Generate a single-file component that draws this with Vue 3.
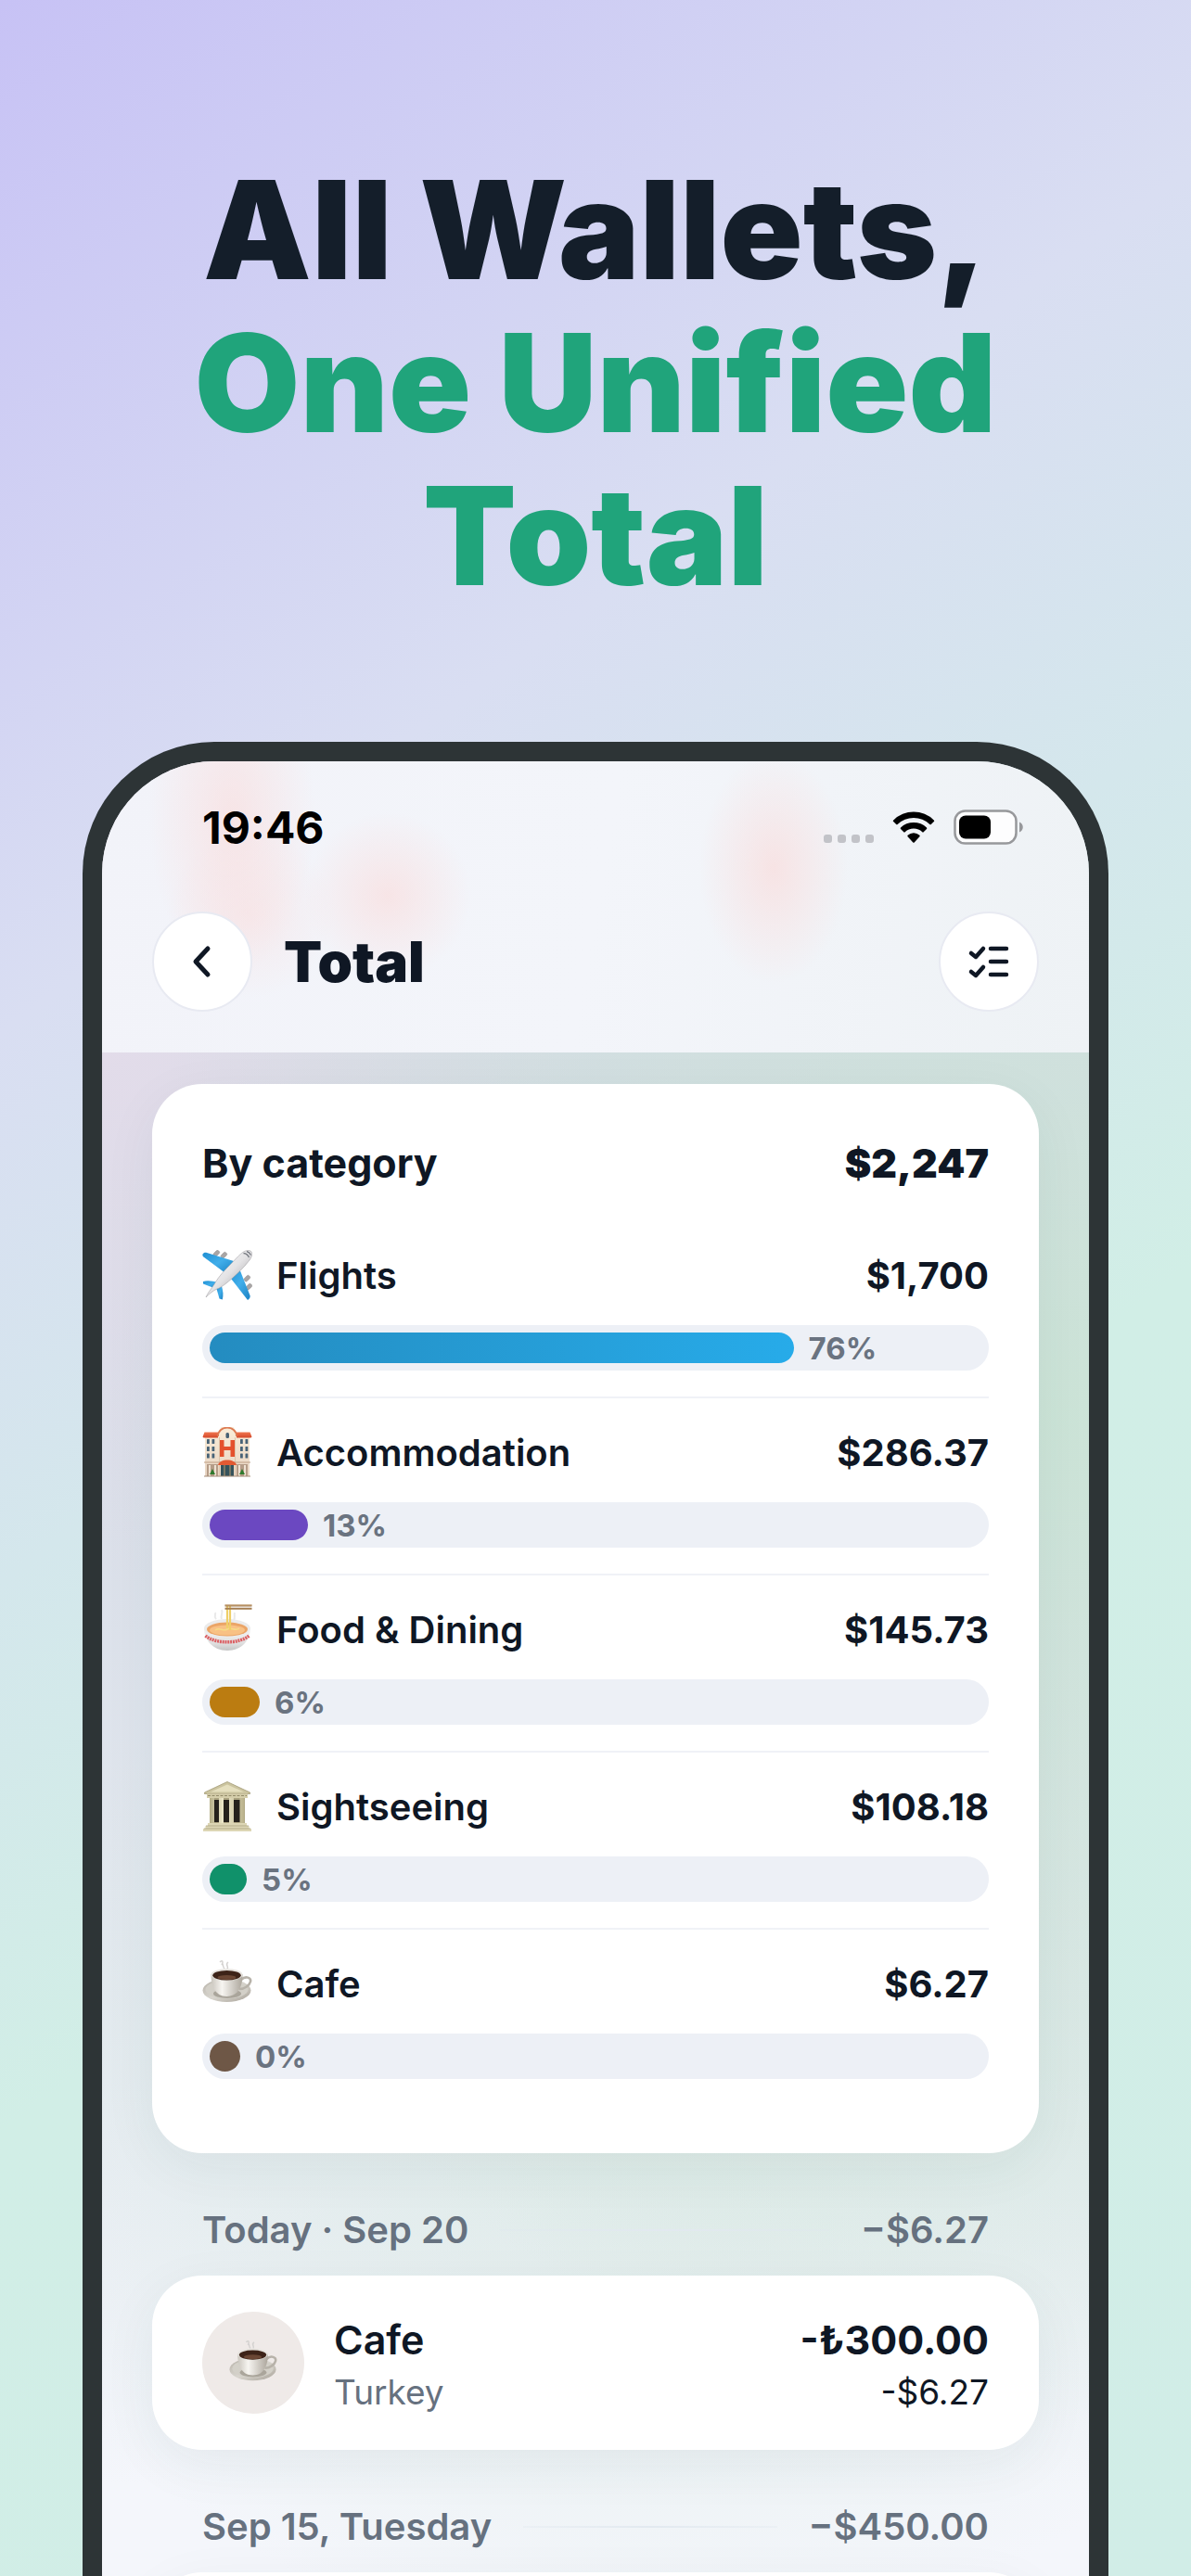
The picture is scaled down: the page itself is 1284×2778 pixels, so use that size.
<template>
  <main class="page">
    <h1 class="headline">
      All Wallets,
      <span class="accent">One Unified<br />Total</span>
    </h1>

    <section class="phone">
      <header class="topbar">
        <div class="status">
          <time>19:46</time>
          <div class="status-icons">
            <svg class="dots" viewBox="0 0 54 36" aria-hidden="true">
              <rect v-for="n in 4" :key="n" :x="(n - 1) * 15" y="26" width="9" height="9" rx="3" />
            </svg>
            <svg class="wifi" viewBox="0 0 46 36" aria-hidden="true">
              <path d="M1.2 10.5a31 31 0 0 1 43.6 0 1 1 0 0 1 0 1.5l-3 3a1 1 0 0 1-1.4 0 25 25 0 0 0-34.8 0 1 1 0 0 1-1.4 0l-3-3a1 1 0 0 1 0-1.5z" />
              <path d="M9 18.6a20 20 0 0 1 28 0 1 1 0 0 1 0 1.4l-3.3 3.3a1 1 0 0 1-1.4 0 13.4 13.4 0 0 0-18.6 0 1 1 0 0 1-1.4 0L9 20a1 1 0 0 1 0-1.4z" />
              <path d="M16.6 26.8a9.2 9.2 0 0 1 12.8 0 1 1 0 0 1 0 1.4l-5.7 6.2a1 1 0 0 1-1.4 0l-5.7-6.2a1 1 0 0 1 0-1.4z" />
            </svg>
            <svg class="battery" viewBox="0 0 76 38" aria-hidden="true">
              <rect x="1.5" y="1.5" width="66" height="35" rx="11" fill="#fdfdfe" stroke="#97989b" stroke-width="2.5" />
              <rect x="6" y="6.5" width="34" height="25" rx="7" />
              <path d="M71 13.5c5 2 5 9 0 11z" fill="#97989b" />
            </svg>
          </div>
        </div>

        <div class="nav">
          <button class="round" type="button" aria-label="Back">
            <svg viewBox="0 0 48 48"><path d="M30 10 17 24l13 14" stroke-width="5" /></svg>
          </button>
          <h2>Total</h2>
          <button class="round" type="button" aria-label="Select">
            <svg viewBox="0 0 48 48">
              <path d="M5 15l5 4 8-9M5 35l5 4 8-9" />
              <path d="M26 10h17M26 24h17M26 38h17" />
            </svg>
          </button>
        </div>
      </header>

      <div class="content">
        <article class="card summary">
          <div class="summary-head">
            <h3>By category</h3>
            <strong>$2,247</strong>
          </div>
          <ul>
            <li v-for="item in categories" :key="item.name">
              <div class="row">
                <svg class="emoji" viewBox="0 0 54 54" aria-hidden="true"><use :href="'#' + item.icon" /></svg>
                <span class="name">{{ item.name }}</span>
                <span class="amount">{{ item.amount }}</span>
              </div>
              <div class="track">
                <div class="fill" :style="{ width: item.share + '%', background: item.color }"></div>
                <span class="percent">{{ Math.round(item.share) }}%</span>
              </div>
            </li>
          </ul>
        </article>

        <template v-for="day in days" :key="day.label">
          <div class="day">
            <span>{{ day.label }}</span>
            <i></i>
            <span>{{ day.total }}</span>
          </div>
          <article class="card entry">
            <template v-if="day.entry">
              <div class="avatar">
                <svg viewBox="0 0 54 54" aria-hidden="true"><use href="#cafe" /></svg>
              </div>
              <div class="labels">
                <span class="title">{{ day.entry.title }}</span>
                <span class="sub">{{ day.entry.place }}</span>
              </div>
              <div class="labels right">
                <span class="title strong">{{ day.entry.local }}</span>
                <span class="sub dark">{{ day.entry.amount }}</span>
              </div>
            </template>
          </article>
        </template>
      </div>
    </section>

    <svg class="sprites" aria-hidden="true">
      <defs>
        <linearGradient id="g-body" x1="0" y1="0" x2="1" y2="1">
          <stop offset="0" stop-color="#ffffff" /><stop offset="0.5" stop-color="#e4e3e5" /><stop offset="1" stop-color="#8d8b8f" />
        </linearGradient>
        <linearGradient id="g-wing" x1="0" y1="0" x2="1" y2="1">
          <stop offset="0" stop-color="#1f8fd3" /><stop offset="0.5" stop-color="#41aeea" /><stop offset="1" stop-color="#1b82c4" />
        </linearGradient>
        <linearGradient id="g-wall" x1="0" y1="0" x2="0" y2="1">
          <stop offset="0" stop-color="#fbeed9" /><stop offset="1" stop-color="#e8d5c3" />
        </linearGradient>
        <linearGradient id="g-roof" x1="0" y1="0" x2="0" y2="1">
          <stop offset="0" stop-color="#f0764f" /><stop offset="1" stop-color="#d4482a" />
        </linearGradient>
        <linearGradient id="g-bowl" x1="0" y1="0" x2="0" y2="1">
          <stop offset="0" stop-color="#f7f7f7" /><stop offset="0.7" stop-color="#dedede" /><stop offset="1" stop-color="#c4c4c4" />
        </linearGradient>
        <linearGradient id="g-stone" x1="0" y1="0" x2="1" y2="0">
          <stop offset="0" stop-color="#b5ae88" /><stop offset="0.4" stop-color="#eee9cb" /><stop offset="1" stop-color="#b9b18b" />
        </linearGradient>
        <linearGradient id="g-cup" x1="0" y1="0" x2="1" y2="0">
          <stop offset="0" stop-color="#c9c5bd" /><stop offset="0.35" stop-color="#f7f5f1" /><stop offset="1" stop-color="#aca69c" />
        </linearGradient>
        <linearGradient id="g-dish" x1="0" y1="0" x2="1" y2="1">
          <stop offset="0" stop-color="#b5b0a7" /><stop offset="0.5" stop-color="#d9d6cf" /><stop offset="1" stop-color="#a8a298" />
        </linearGradient>

        <g id="flights">
          <g fill="#aaa6a6" stroke="#8f8b8b" stroke-width="0.6">
            <rect x="12" y="2" width="7" height="4" rx="1.5" transform="rotate(-45 15 4)" />
            <rect x="20" y="4" width="7" height="4" rx="1.5" transform="rotate(-45 23 6)" />
            <rect x="45" y="29" width="7" height="4" rx="1.5" transform="rotate(-45 48 31)" />
            <rect x="47" y="38" width="7" height="4" rx="1.5" transform="rotate(-45 50 40)" />
          </g>
          <path d="M.5 4.5c1-1.5 2.5-2 4.5-1.5L34 12l-9 13L1.500 7.500c-1-.7-1.300-2-1-3z" fill="url(#g-wing)" />
          <path d="M28 27l12-7 11.5 29c.7 2-.8 4-2.5 5z" fill="url(#g-wing)" />
          <path d="M1 34c4-1.5 10-.8 16 1l-3 6C9 40 4 37.500 1 36.500z" fill="url(#g-wing)" />
          <path d="M15 40l6-1c1.5 5 2 10 .8 14.5l-3.3-1z" fill="url(#g-wing)" />
          <path d="M4 51c2-5 5-8 9-14 3-5.500 8-12 16-20S41 3.500 46 1.200c3.500-1.300 6.500-.8 7.200 1 1.200 3-.4 7-3.200 10-5 6.500-12 13.500-19 19.500S20 40.500 16 42 7 48 4 51z" fill="url(#g-body)" stroke="#98969a" stroke-width="0.5" />
          <path d="M44.500 3.500c3 .2 5 2 6 4.500M48 1.500c2 .5 3.500 2 4.500 4" fill="none" stroke="#777b82" stroke-width="1.3" />
        </g>

        <g id="hotel">
          <path d="M3 10h15V6a9 9 0 0 1 18 0v4h15v43H3z" fill="url(#g-wall)" />
          <path d="M.5 10.500 2.500 5.500H17v6H1.500zM53.500 10.500l-2-5H37v6h15.500z" fill="url(#g-roof)" />
          <path d="M17 10C17-2.500 37-2.500 37 10" fill="none" stroke="#dc7a52" stroke-width="1.8" />
          <path d="M18.500 11v41M35.500 11v41" stroke="#d7bfa4" stroke-width="0.8" />
          <path d="M19 14h4.500v7h7v-7H35v18h-4.500v-7h-7v7H19z" fill="#e4512d" />
          <rect x="25.5" y="6" width="3.5" height="6" rx="1.5" fill="#476174" />
          <g fill="#486377">
            <template v-for="y in [13, 21, 28.5]" :key="y">
              <rect v-for="x in [5, 10.5, 41, 46.5]" :key="x" :x="x" :y="y" width="2.8" height="5" rx="0.5" />
            </template>
          </g>
          <path d="M2 38h50" stroke="#bd9d83" stroke-width="1.2" />
          <path d="M5 40h12v13H5zM37 40h12v13H37z" fill="#b59c87" />
          <path d="M8 53V41M14 53V41M40 53V41M46 53V41" stroke="#eee1d2" stroke-width="2" />
          <path d="M17 41c1-7.500 19-7.500 20 0z" fill="#e25a33" />
          <rect x="20" y="41" width="14" height="12" fill="#35525b" />
          <path d="M24 41v12M30 41v12" stroke="#c9a575" stroke-width="0.9" />
          <path d="M11 45l3 6H8zM43 45l3 6h-6z" fill="#2f7a2d" />
          <path d="M2 53h50" stroke="#a38b78" stroke-width="1.2" />
        </g>

        <g id="food">
          <path d="M15 16c-3-3 0-5-1-7M21 16c-2-4 2-6 0-10M34 17c2-2 0-5 1-8" fill="none" stroke="#e9e9e9" stroke-width="2" />
          <path d="M2 26c0 12 9 24 25 24s25-12 25-24z" fill="url(#g-bowl)" />
          <ellipse cx="27" cy="26" rx="25" ry="10" fill="#ebebeb" />
          <ellipse cx="27" cy="27" rx="22" ry="7.5" fill="#eba567" />
          <ellipse cx="27" cy="28" rx="19" ry="5.5" fill="#f8c185" />
          <path d="M14 28c5-4 8 2 13-1s8 3 13-1" fill="none" stroke="#f6db87" stroke-width="1.5" />
          <path d="M3.500 34c10 9 37 9 47 0" fill="none" stroke="#db5f63" stroke-width="3.5" stroke-dasharray="2 0.8" />
          <path d="M27 2v24M30 2v26" stroke="#efcf68" stroke-width="2.2" />
          <path d="M24.500 1.500h29M24.500 4.800h29" stroke="#a47d52" stroke-width="2" />
          <path d="M24.500 1h29" stroke="#cfab7b" stroke-width="0.8" />
        </g>

        <g id="sights">
          <path d="M8 17h38v29H8z" fill="#aaa27f" />
          <path d="M12 20h6v24h-6zM23 20h6v24h-6zM34 20h7v24h-7z" fill="#25211c" />
          <path d="M8 18h5v27H8zM18 18h5v27h-5zM29 18h5v27h-5zM40.500 18h5v27h-5z" fill="url(#g-stone)" />
          <path d="M2.500 12 27 .5 51.500 12v1.500h-49z" fill="#cbc49f" stroke="#a39b76" stroke-width="0.8" />
          <path d="M9 11.500 27 3.500l18 8z" fill="#e5dfbe" />
          <path d="M5 13.500h44V18H5z" fill="#d5ceaa" />
          <path d="M6 15.500h42" stroke="#938b69" stroke-width="1" stroke-dasharray="3 1.5" />
          <path d="M6 45h42v3h2.500v3H53v3H1v-3h2.500v-3H6z" fill="#ddd6b5" />
          <path d="M4 48h46M2 51h50" stroke="#aaa27f" stroke-width="0.8" />
        </g>

        <g id="cafe">
          <path d="M19 4c3-3 4 0 2 3M27 11c2-3-3-4 1-7M24 11c-2-2-1-3-2-5" fill="none" stroke="#d4d2d0" stroke-width="1.5" />
          <ellipse cx="26.5" cy="34.5" rx="26" ry="12.5" fill="url(#g-dish)" />
          <ellipse cx="26.5" cy="33.5" rx="23" ry="10" fill="#d3d0c8" />
          <ellipse cx="27" cy="38" rx="15" ry="5" fill="#aaa59b" />
          <path d="M42 23c5-5 11-2 10 2s-6 8-12 8" fill="none" stroke="#b7b2a9" stroke-width="2.6" />
          <path d="M9.500 17c0 12 4 24 17 24s17-12 17-24z" fill="url(#g-cup)" />
          <ellipse cx="26.5" cy="17.5" rx="17" ry="6.5" fill="#e6e3de" />
          <ellipse cx="26.5" cy="18.3" rx="15.2" ry="5.2" fill="#3d2318" />
          <ellipse cx="26.5" cy="20.5" rx="10" ry="2.5" fill="#6a4634" />
        </g>
      </defs>
    </svg>
  </main>
</template>

<script setup>
const categories = [
  { name: 'Flights', icon: 'flights', amount: '$1,700', share: 75.67, color: 'linear-gradient(90deg, #248cc0, #27abe9)' },
  { name: 'Accommodation', icon: 'hotel', amount: '$286.37', share: 12.75, color: '#6b48c1' },
  { name: 'Food & Dining', icon: 'food', amount: '$145.73', share: 6.49, color: '#bb7c11' },
  { name: 'Sightseeing', icon: 'sights', amount: '$108.18', share: 4.82, color: '#10916a' },
  { name: 'Cafe', icon: 'cafe', amount: '$6.27', share: 0.28, color: '#6e5746' }
];

const days = [
  {
    label: 'Today · Sep 20',
    total: '−$6.27',
    entry: { title: 'Cafe', place: 'Turkey', local: '-₺300.00', amount: '-$6.27' }
  },
  { label: 'Sep 15, Tuesday', total: '−$450.00' }
];
</script>

<style>
body {
  margin: 0;
}
</style>

<style scoped>
.page {
  box-sizing: border-box;
  display: flex;
  flex-direction: column;
  height: 100vh;
  padding: 165px 89px 0;
  overflow: hidden;
  background: linear-gradient(144deg, #c7c2f5 0%, #d9def2 30%, #d4e7ec 46%, #d1eee6 62%, #d1ede7 100%);
  color: #0f1724;
  font-family: Inter, "Liberation Sans", sans-serif;
}

h1,
h2,
h3,
ul {
  margin: 0;
  padding: 0;
}

.headline {
  margin-bottom: 140px;
  font-size: 147px;
  font-weight: 900;
  line-height: 165px;
  text-align: center;
  color: #141e2a;
}

.accent {
  display: block;
  color: #20a47b;
}

.phone {
  flex: 1;
  min-height: 0;
  overflow: hidden;
  border: 21px solid #2d3436;
  border-bottom: 0;
  border-radius: 142px 142px 0 0;
  background:
    radial-gradient(ellipse 95% 56% at 96% 36%, rgba(202, 228, 213, 0.9), rgba(208, 228, 220, 0)),
    radial-gradient(ellipse 70% 30% at 55% 74%, rgba(218, 234, 228, 0.7), rgba(218, 234, 228, 0)),
    radial-gradient(ellipse 50% 30% at 0% 15%, rgba(228, 220, 234, 0.9), rgba(228, 220, 234, 0)),
    linear-gradient(180deg, #d6dbe7 15%, #dadfe9 40%, #e4eaf0 70%, #f4f6fb 95%);
}

.topbar {
  padding: 43px 54px 44px;
  background:
    radial-gradient(ellipse 90px 170px at 140px 60px, rgba(250, 218, 217, 0.6), rgba(250, 218, 217, 0)),
    radial-gradient(ellipse 90px 90px at 160px 165px, rgba(250, 218, 217, 0.4), rgba(250, 218, 217, 0)),
    radial-gradient(ellipse 90px 90px at 308px 145px, rgba(250, 218, 217, 0.6), rgba(250, 218, 217, 0)),
    radial-gradient(ellipse 80px 125px at 724px 115px, rgba(250, 218, 217, 0.65), rgba(250, 218, 217, 0)),
    linear-gradient(100deg, #f2f3f9, #f3f5fa 50%, #eef2f5);
}

.status {
  display: flex;
  align-items: center;
  justify-content: space-between;
  height: 56px;
  margin-bottom: 63px;
  padding: 0 16px 0 54px;
  color: #000;
  font-size: 48px;
  font-weight: 700;
}

.status-icons {
  display: flex;
  align-items: center;
}

.dots {
  width: 54px;
  height: 36px;
  margin-right: 20px;
  fill: #c2c3c8;
}

.wifi {
  width: 46px;
  height: 36px;
  margin-right: 20px;
}

.battery {
  width: 76px;
  height: 38px;
}

.nav {
  display: flex;
  align-items: center;
  gap: 34px;
}

.nav h2 {
  flex: 1;
  font-size: 60px;
  font-weight: 900;
  line-height: 72px;
}

.round {
  display: grid;
  place-items: center;
  box-sizing: border-box;
  width: 108px;
  height: 108px;
  padding: 0;
  border: 2px solid #e8eaf2;
  border-radius: 50%;
  background: #fff;
}

.round svg {
  width: 48px;
  height: 48px;
  fill: none;
  stroke: #0f1724;
  stroke-width: 4.5;
  stroke-linecap: round;
  stroke-linejoin: round;
}

.content {
  padding: 34px 54px 0;
}

.card {
  border-radius: 54px;
  background: #fff;
  box-shadow: 0 16px 60px rgba(40, 60, 60, 0.06);
}

.summary {
  padding: 54px 54px 52px;
}

.summary-head {
  display: flex;
  justify-content: space-between;
  margin-bottom: 32px;
  font-size: 43px;
  line-height: 62px;
}

.summary-head h3 {
  font-size: 43px;
  font-weight: 700;
}

.summary-head strong {
  font-weight: 900;
}

ul {
  list-style: none;
}

li {
  padding: 28px 0;
}

li + li {
  border-top: 2px solid #f0f2f7;
}

.row {
  display: flex;
  align-items: center;
  height: 60px;
  margin-bottom: 24px;
  font-size: 40px;
  font-weight: 600;
}

.emoji {
  width: 54px;
  height: 54px;
  margin-right: 26px;
}

.amount {
  margin-left: auto;
  font-weight: 700;
}

.track {
  display: flex;
  align-items: center;
  gap: 16px;
  height: 33px;
  padding: 8px;
  border-radius: 25px;
  background: #edf0f6;
}

.fill {
  min-width: 33px;
  height: 33px;
  border-radius: 17px;
}

.percent {
  color: #6a7380;
  font-size: 33px;
  font-weight: 700;
}

.day {
  display: flex;
  align-items: center;
  gap: 34px;
  padding: 55px 54px 21px;
  color: #66717f;
  font-size: 40px;
  font-weight: 600;
  line-height: 56px;
}

.day i {
  flex: 1;
  height: 2px;
  background: linear-gradient(90deg, rgba(222, 230, 238, 0.3), #e2e9f0, rgba(222, 230, 238, 0.3));
}

.entry {
  display: flex;
  align-items: center;
  box-sizing: border-box;
  min-height: 188px;
  padding: 37px 54px;
}

.avatar {
  display: grid;
  place-items: center;
  width: 110px;
  height: 110px;
  margin-right: 32px;
  border-radius: 50%;
  background: #efeae8;
}

.avatar svg {
  width: 52px;
  height: 52px;
}

.labels {
  display: flex;
  flex-direction: column;
}

.right {
  margin-left: auto;
  text-align: right;
}

.title {
  font-size: 43px;
  font-weight: 600;
  line-height: 64px;
}

.strong {
  font-weight: 700;
}

.sub {
  color: #66717f;
  font-size: 37px;
  line-height: 50px;
}

.dark {
  color: #0f1724;
}

.sprites {
  position: absolute;
  width: 0;
  height: 0;
}
</style>
